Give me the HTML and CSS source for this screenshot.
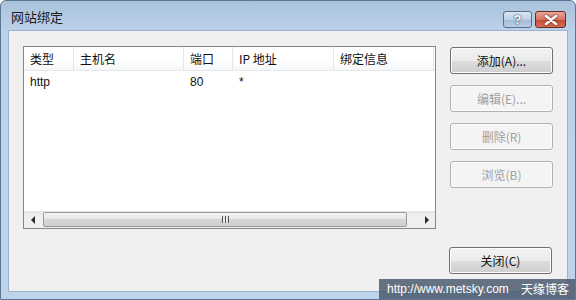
FILE: index.html
```html
<html>
<head>
<meta name="viewport" content="width=device-width, initial-scale=1">
<link rel="stylesheet" href="styles.css">
</head>
<body>
<div class="window">
  <div class="titlebar">
    <span class="title">网站绑定</span>
    <div class="caption-btns">
      <div class="cap help">?</div>
      <div class="cap close">
        <svg width="14" height="10" viewBox="0 0 14 10"><path d="M2 1 L12 9 M12 1 L2 9" stroke="#fff" stroke-width="2.6" stroke-linecap="round"/><path d="M2 1 L12 9 M12 1 L2 9" stroke="#f4f4f4" stroke-width="1.4" stroke-linecap="round"/></svg>
      </div>
    </div>
  </div>
  <div class="client">
    <div class="main">
      <div class="listview">
        <div class="lv-header">
          <div class="col c1">类型</div>
          <div class="col c2">主机名</div>
          <div class="col c3">端口</div>
          <div class="col c4">IP 地址</div>
          <div class="col c5">绑定信息</div>
        </div>
        <div class="lv-row">
          <div class="col c1">http</div>
          <div class="col c2"></div>
          <div class="col c3">80</div>
          <div class="col c4">*</div>
          <div class="col c5"></div>
        </div>
        <div class="lv-fill"></div>
        <div class="hscroll">
          <div class="arrow"><span class="tri left"></span></div>
          <div class="track">
            <div class="thumb"><span class="grip"></span></div>
          </div>
          <div class="arrow"><span class="tri right"></span></div>
        </div>
      </div>
      <div class="side-btns">
        <div class="btn">添加(A)...</div>
        <div class="btn disabled">编辑(E)...</div>
        <div class="btn disabled">删除(R)</div>
        <div class="btn disabled">浏览(B)</div>
      </div>
    </div>
    <div class="footer">
      <div class="btn">关闭(C)</div>
    </div>
  </div>
  <div class="watermark"><span>http://www.metsky.com</span><span>天缘博客</span></div>
</div>
</body>
</html>
```

FILE: styles.css
```css
body {
  margin: 0;
  font-family: "Liberation Sans", "Noto Sans CJK SC", sans-serif;
  font-size: 12px;
}

.window {
  position: relative;
  width: 576px;
  height: 300px;
  box-sizing: border-box;
  border: 1px solid #5b7594;
  border-radius: 6px 6px 0 0;
  background: linear-gradient(#a9c1da, #bcd2ea 30px, #bed4eb);
  display: flex;
  flex-direction: column;
  overflow: hidden;
}

.titlebar {
  height: 29px;
  display: flex;
  align-items: flex-start;
  padding-left: 10px;
}

.title {
  margin-top: 8px;
  font-family: "Noto Sans CJK SC", sans-serif;
  font-size: 13px;
  line-height: 16px;
  color: #1b1b1b;
}

.caption-btns {
  margin-left: auto;
  margin-right: 9px;
  margin-top: 10px;
  display: flex;
  gap: 3px;
}

.cap {
  height: 15px;
  border: 1px solid #5d6f86;
  border-radius: 3px;
  display: flex;
  align-items: center;
  justify-content: center;
}

.help {
  width: 27px;
  background: linear-gradient(#dbe6f3, #bcd0e7 50%, #a5bcd8 51%, #b8cde6);
  color: #fff;
  font-weight: bold;
  font-size: 13px;
  text-shadow: 0 0 2px #2c4766, 0 0 1px #2c4766;
}

.close {
  width: 29px;
  border-color: #6a2a22;
  background: linear-gradient(#e9a99c, #d4735f 50%, #c44a35 51%, #d46f55);
}

.close svg {
  filter: drop-shadow(0 0 1px #5a1a12);
}

.client {
  flex: 1;
  margin: 0 7px 7px 7px;
  background: #f0f0f0;
  border: 1px solid #9db3cb;
  padding: 15px 14px 0 14px;
  display: flex;
  flex-direction: column;
}

.main {
  display: flex;
  gap: 14px;
}

.listview {
  width: 414px;
  height: 183px;
  box-sizing: border-box;
  border: 1px solid #828790;
  background: #fff;
  display: flex;
  flex-direction: column;
}

.lv-header {
  height: 23px;
  display: flex;
  border-bottom: 1px solid #e3e6ea;
  background: linear-gradient(#ffffff, #ffffff 60%, #f5f6f7);
  font-family: "Noto Sans CJK SC", sans-serif;
}

.lv-header .col {
  border-right: 1px solid #e3e5e8;
}

.lv-row {
  height: 22px;
  display: flex;
}

.col {
  box-sizing: border-box;
  padding-left: 6px;
  display: flex;
  align-items: center;
  color: #111;
}

.c1 { width: 50px; }
.c2 { width: 110px; }
.c3 { width: 49px; }
.c4 { width: 101px; }
.c5 { width: 100px; }

.lv-fill {
  flex: 1;
}

.hscroll {
  height: 17px;
  display: flex;
  background: linear-gradient(#e3e3e3, #f0f0f0 30%, #f0f0f0);
}

.arrow {
  width: 17px;
  display: flex;
  align-items: center;
  justify-content: center;
}

.tri {
  width: 0;
  height: 0;
  border-top: 4px solid transparent;
  border-bottom: 4px solid transparent;
}

.tri.left {
  border-right: 4px solid #2b2b2b;
}

.tri.right {
  border-left: 4px solid #2b2b2b;
}

.track {
  flex: 1;
  display: flex;
  padding: 1px 0;
}

.thumb {
  margin-left: 2px;
  width: 364px;
  box-sizing: border-box;
  border: 1px solid #9a9a9a;
  border-radius: 2px;
  background: linear-gradient(#f3f3f3, #e8e8e8 45%, #d6d6d6 50%, #cfcfcf);
  display: flex;
  align-items: center;
  justify-content: center;
}

.grip {
  width: 7px;
  height: 7px;
  background: repeating-linear-gradient(90deg, #555 0 1px, #e8e8e8 1px 3px);
}

.side-btns {
  margin-top: 1px;
  display: flex;
  flex-direction: column;
  gap: 11px;
}

.btn {
  width: 103px;
  height: 27px;
  box-sizing: border-box;
  border: 1px solid #707070;
  border-radius: 3px;
  background: linear-gradient(#f2f2f2, #ebebeb 50%, #dddddd 51%, #cfcfcf);
  box-shadow: inset 0 0 0 1px #fcfcfc;
  display: flex;
  align-items: center;
  justify-content: center;
  font-family: "Noto Sans CJK SC", sans-serif;
  color: #111;
}

.btn.disabled {
  border-color: #adb2b5;
  background: #f4f4f4;
  color: #a0a0a0;
}

.footer {
  margin-top: 18px;
  display: flex;
  justify-content: flex-end;
  padding-right: 1px;
}

.watermark {
  position: absolute;
  right: 0;
  bottom: 0;
  width: 196px;
  height: 20px;
  background: rgba(70, 85, 105, 0.82);
  color: #fff;
  font-size: 12px;
  line-height: 20px;
  padding: 0 6px 0 8px;
  box-sizing: border-box;
  display: flex;
  justify-content: space-between;
  white-space: nowrap;
}

.watermark span:last-child {
  font-family: "Noto Sans CJK SC", sans-serif;
}
```
